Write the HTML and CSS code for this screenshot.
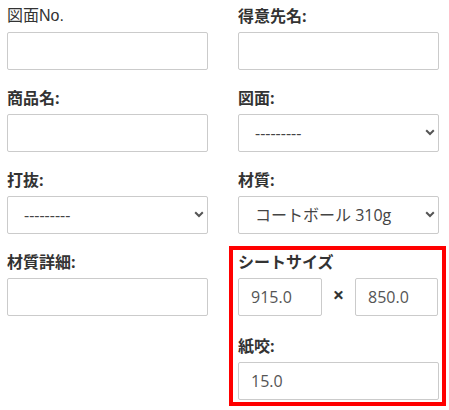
FILE: index.html
```html
<!DOCTYPE html>
<html lang="ja">
<head>
<meta charset="utf-8">
<title>Form</title>
<link rel="stylesheet" href="styles.css">
</head>
<body>
<form class="form">
  <div class="row">
    <div class="field">
      <label class="label label--plain">図面No.</label>
      <input class="control" type="text">
    </div>
    <div class="field">
      <label class="label">得意先名:</label>
      <input class="control" type="text">
    </div>
  </div>
  <div class="row">
    <div class="field">
      <label class="label">商品名:</label>
      <input class="control" type="text">
    </div>
    <div class="field">
      <label class="label">図面:</label>
      <div class="select-wrap">
        <select class="control select"><option>---------</option></select>
        <svg class="chevron" width="10" height="7" viewBox="0 0 10 7"><path d="M1.2 1.3 L5 5 L8.8 1.3" fill="none" stroke="#555" stroke-width="2"/></svg>
      </div>
    </div>
  </div>
  <div class="row">
    <div class="field">
      <label class="label">打抜:</label>
      <div class="select-wrap">
        <select class="control select"><option>---------</option></select>
        <svg class="chevron" width="10" height="7" viewBox="0 0 10 7"><path d="M1.2 1.3 L5 5 L8.8 1.3" fill="none" stroke="#555" stroke-width="2"/></svg>
      </div>
    </div>
    <div class="field">
      <label class="label">材質:</label>
      <div class="select-wrap">
        <select class="control select"><option>コートボール 310g</option></select>
        <svg class="chevron" width="10" height="7" viewBox="0 0 10 7"><path d="M1.2 1.3 L5 5 L8.8 1.3" fill="none" stroke="#555" stroke-width="2"/></svg>
      </div>
    </div>
  </div>
  <div class="row">
    <div class="field">
      <label class="label">材質詳細:</label>
      <input class="control" type="text">
    </div>
    <div class="highlight">
      <div class="field">
        <label class="label">シートサイズ</label>
        <div class="size-row">
          <input class="control control--size" type="text" value="915.0">
          <span class="times">×</span>
          <input class="control control--size control--size-b" type="text" value="850.0">
        </div>
      </div>
      <div class="field field--inner">
        <label class="label">紙咬:</label>
        <input class="control" type="text" value="15.0">
      </div>
    </div>
  </div>
</form>
</body>
</html>
```
FILE: styles.css
```css
* { box-sizing: border-box; }

html, body {
  margin: 0;
  padding: 0;
  background: #fff;
}

body {
  font-family: "Open Sans", "Noto Sans CJK JP", sans-serif;
  color: #333;
  width: 449px;
  height: 410px;
  overflow: hidden;
}

.form {
  padding: 6px 0 0 7px;
}

.row {
  display: grid;
  grid-template-columns: 201px 201px;
  column-gap: 30px;
  align-items: start;
}

.field {
  display: flex;
  flex-direction: column;
  margin-bottom: 18px;
}

.label {
  display: block;
  height: 20px;
  line-height: 20px;
  font-size: 16px;
  font-weight: 700;
  margin-bottom: 6px;
  color: #333;
  white-space: nowrap;
}

.label--plain {
  font-weight: 400;
  font-family: "Liberation Sans", "Noto Sans CJK JP", sans-serif;
}

.control {
  display: block;
  width: 100%;
  height: 38px;
  margin: 0;
  padding: 0 12px;
  border: 1px solid #cbcbcb;
  border-radius: 2px;
  background: #fff;
  font-family: "Open Sans", "Noto Sans CJK JP", sans-serif;
  font-size: 16px;
  color: #555;
  outline: none;
}

.select-wrap {
  position: relative;
}

.select {
  -webkit-appearance: none;
  appearance: none;
  padding-left: 16px;
  color: #444;
}

.chevron {
  position: absolute;
  right: 4px;
  top: 15px;
  pointer-events: none;
}

.highlight {
  margin: -6px -7px -6px -9px;
  padding: 2px 3px 2px 5px;
  border: 4px solid #f00;
}

.highlight .field {
  margin-bottom: 0;
}

.highlight .field--inner {
  margin-top: 20px;
}

.size-row {
  display: flex;
  align-items: center;
}

.control--size {
  width: 84px;
  flex: 0 0 84px;
}

.control--size-b {
  flex: 0 0 83px;
  width: 83px;
}

.times {
  flex: 0 0 33px;
  text-align: center;
  font-size: 20px;
  font-weight: 700;
  color: #333;
  line-height: 1;
  margin-top: -4px;
}
```
